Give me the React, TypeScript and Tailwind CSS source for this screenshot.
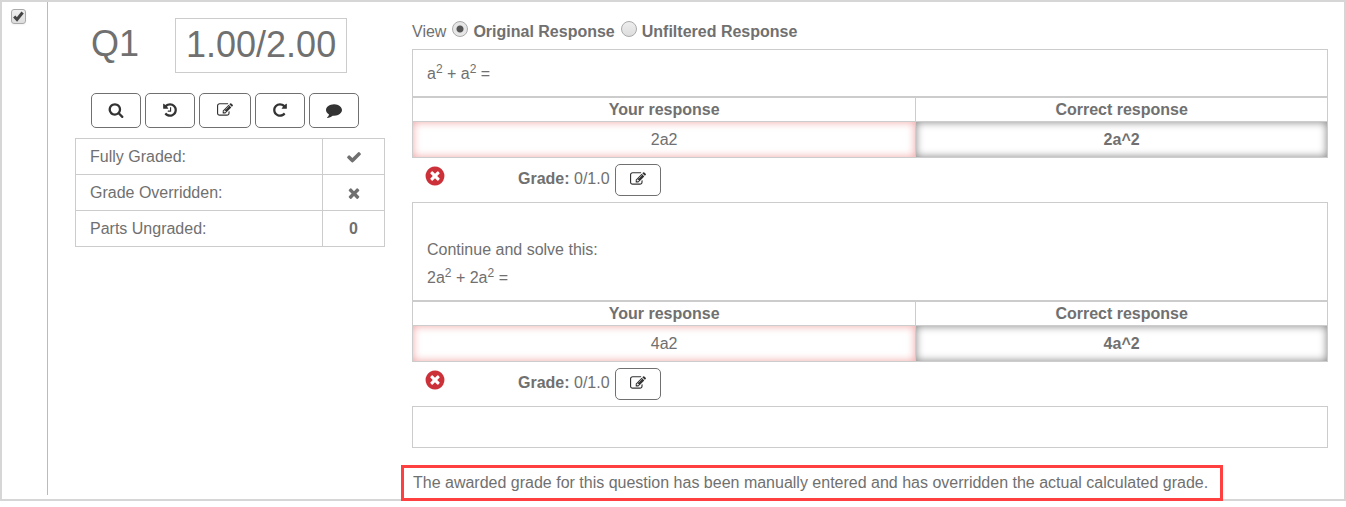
import { ReactNode, useState } from 'react'
import clsx from 'clsx'

const icons = {
    search: 'M1216 832q0-185-131.5-316.5t-316.5-131.5-316.5 131.5-131.5 316.5 131.5 316.5 316.5 131.5 316.5-131.5 131.5-316.5zm512 832q0 52-38 90t-90 38q-54 0-90-38l-343-342q-179 124-399 124-143 0-273.5-55.5t-225-150-150-225-55.5-273.5 55.5-273.5 150-225 225-150 273.5-55.5 273.5 55.5 225 150 150 225 55.5 273.5q0 220-124 399l343 343q37 37 37 90z',
    history: 'M1664 896q0 156-61 298t-164 245-245 164-298 61q-172 0-327-72.5t-264-204.5q-7-10-6.5-22.5t8.5-20.5l137-138q10-9 25-9 16 2 23 12 73 95 179 147t225 52q104 0 198.5-40.5t163.5-109.5 109.5-163.5 40.5-198.5-40.5-198.5-109.5-163.5-163.5-109.5-198.5-40.5q-98 0-188 35.5t-160 101.5l137 138q31 30 14 69-17 40-59 40h-448q-26 0-45-19t-19-45v-448q0-42 40-59 39-17 69 14l130 129q107-101 244.5-156.5t284.5-55.5q156 0 298 61t245 164 164 245 61 298zm-640-288v448q0 14-9 23t-23 9h-320q-14 0-23-9t-9-23v-64q0-14 9-23t23-9h224v-352q0-14 9-23t23-9h64q14 0 23 9t9 23z',
    edit: 'M888 1184l116-116-152-152-116 116v56h96v96h56zm440-720q-16-16-33 1l-350 350q-17 17-1 33t33-1l350-350q17-17 1-33zm80 594v190q0 119-84.5 203.5t-203.5 84.5h-832q-119 0-203.5-84.5t-84.5-203.5v-832q0-119 84.5-203.5t203.5-84.5h832q63 0 117 25 15 7 18 23 3 17-9 29l-49 49q-14 14-32 8-23-6-45-6h-832q-66 0-113 47t-47 113v832q0 66 47 113t113 47h832q66 0 113-47t47-113v-126q0-13 9-22l64-64q15-15 35-7t20 29zm-96-738l288 288-672 672h-288v-288zm444 132l-92 92-288-288 92-92q28-28 68-28t68 28l152 152q28 28 28 68t-28 68z',
    repeat: 'M1664 256v448q0 26-19 45t-45 19h-448q-42 0-59-40-17-39 14-69l138-138q-148-137-349-137-104 0-198.5 40.5t-163.5 109.5-109.5 163.5-40.5 198.5 40.5 198.5 109.5 163.5 163.5 109.5 198.5 40.5q119 0 225-52t179-147q7-10 23-12 15 0 25 9l137 138q9 8 9.5 20.5t-7.5 22.5q-109 132-264 204.5t-327 72.5q-156 0-298-61t-245-164-164-245-61-298 61-298 164-245 245-164 298-61q147 0 284.5 55.5t244.5 156.5l130-129q29-31 70-14 39 17 39 59z',
    comment: 'M1792 896q0 174-120 321.5t-326 233-450 85.5q-70 0-145-8-198 175-460 242-49 14-114 22h-5q-15 0-27-10.5t-16-27.5v-1q-3-4-.5-12t2-10 4.5-9.5l6-9 7-8.5 8-9q7-8 31-34.5t34.5-38 31-39.5 32.5-51 27-59 26-76q-157-89-247.5-220t-90.5-281q0-130 71-248.5t191-204.5 286-136.5 348-50.5q244 0 450 85.5t326 233 120 321.5z',
    check: 'M1671 566q0 40-28 68l-724 724-136 136q-28 28-68 28t-68-28l-136-136-362-362q-28-28-28-68t28-68l136-136q28-28 68-28t68 28l294 295 656-657q28-28 68-28t68 28l136 136q28 28 28 68z',
    times: 'M1490 1322q0 40-28 68l-136 136q-28 28-68 28t-68-28l-294-294-294 294q-28 28-68 28t-68-28l-136-136q-28-28-28-68t28-68l294-294-294-294q-28-28-28-68t28-68l136-136q28-28 68-28t68 28l294 294 294-294q28-28 68-28t68 28l136 136q28 28 28 68t-28 68l-294 294 294 294q28 28 28 68z',
    timesCircle:
        'M1277 1122q0-26-19-45l-181-181 181-181q19-19 19-45 0-27-19-46l-90-90q-19-19-46-19-26 0-45 19l-181 181-181-181q-19-19-45-19-27 0-46 19l-90 90q-19 19-19 46 0 26 19 45l181 181-181 181q-19 19-19 45 0 27 19 46l90 90q19 19 46 19 26 0 45-19l181-181 181 181q19 19 45 19 27 0 46-19l90-90q19-19 19-46zm387-226q0 209-103 385.5t-279.5 279.5-385.5 103-385.5-103-279.5-279.5-103-385.5 103-385.5 279.5-279.5 385.5-103 385.5 103 279.5 279.5 103 385.5z',
}

type IconName = keyof typeof icons

const Icon = ({ name, className = 'size-4' }: { name: IconName; className?: string }) => (
    <svg viewBox="0 0 1792 1792" fill="currentColor" className={className} aria-hidden="true">
        <path d={icons[name]} />
    </svg>
)

interface IconButtonProps {
    icon: IconName
    label: string
    className: string
}

const IconButton = ({ icon, label, className }: IconButtonProps) => (
    <button
        type="button"
        aria-label={label}
        className={clsx(
            'flex items-center justify-center rounded-[5px] border border-[#707070] bg-white pb-[2px] text-[#333]',
            className
        )}
    >
        <Icon name={icon} />
    </button>
)

const actions: IconButtonProps[] = [
    { icon: 'search', label: 'View details', className: 'h-[35px] w-[50px]' },
    { icon: 'history', label: 'History', className: 'h-[35px] w-[50px]' },
    { icon: 'edit', label: 'Edit grade', className: 'h-[35px] w-[52px]' },
    { icon: 'repeat', label: 'Regrade', className: 'h-[35px] w-[50px]' },
    { icon: 'comment', label: 'Comment', className: 'h-[35px] w-[50px]' },
]

const summary: { label: string; value: ReactNode }[] = [
    { label: 'Fully Graded:', value: <Icon name="check" className="mx-auto size-4" /> },
    { label: 'Grade Overridden:', value: <Icon name="times" className="mx-auto size-4" /> },
    { label: 'Parts Ungraded:', value: '0' },
]

const views = ['Original Response', 'Unfiltered Response']

const Prompt = ({ children }: { children: ReactNode }) => (
    <div className="border border-[#ccc] px-[14px] pt-[10px] pb-2 leading-7">{children}</div>
)

const ResponsePart = ({ response, correct }: { response: string; correct: string }) => (
    <>
        <table className="w-full table-fixed border-collapse text-center">
            <thead>
                <tr className="h-6">
                    <th className="w-[55%] border border-[#ccc]">Your response</th>
                    <th className="border border-[#ccc]">Correct response</th>
                </tr>
            </thead>
            <tbody>
                <tr className="h-9">
                    <td className="border border-[#ccc] shadow-[inset_0_0_8px_#f0a5a5]">
                        {response}
                    </td>
                    <td className="border border-[#ccc] font-bold shadow-[inset_0_0_8px_#808080]">
                        {correct}
                    </td>
                </tr>
            </tbody>
        </table>
        <div className="flex h-11 items-center pl-3">
            <Icon name="timesCircle" className="mb-2 size-[22px] text-[#cc3038]" />
            <p className="mr-[5px] mb-[2px] ml-[72px]">
                <b>Grade:</b> 0/1.0
            </p>
            <IconButton icon="edit" label="Edit part grade" className="h-8 w-[46px]" />
        </div>
    </>
)

const App = () => {
    const [view, setView] = useState(views[0])

    return (
        <main className="flex border-2 border-[#d6d6d6] bg-white font-['Liberation_Sans',Arial,sans-serif] text-base leading-5 text-[#707070]">
            <div className="mb-1 w-[46px] shrink-0 border-r border-[#bbb] pt-[7px] pl-[9px]">
                <label className="relative block size-[15px]">
                    <input
                        type="checkbox"
                        defaultChecked
                        aria-label="Select question 1"
                        className="peer block size-[15px] appearance-none rounded-[3px] border border-[#aaa] bg-linear-to-b from-[#eee] to-[#ddd] shadow-xs"
                    />
                    <svg
                        viewBox="0 0 15 15"
                        className="pointer-events-none absolute inset-0 hidden size-[15px] peer-checked:block"
                        aria-hidden="true"
                    >
                        <path
                            d="M3.2 7.5l2.8 3 5.6-7"
                            fill="none"
                            stroke="#444"
                            strokeWidth="3"
                        />
                    </svg>
                </label>
            </div>

            <section className="ml-[27px] w-[310px] shrink-0 pt-4">
                <div className="flex items-start gap-9 pl-4 text-4xl leading-[41px]">
                    <h1 className="pt-[5px]">Q1</h1>
                    <div className="border border-[#ccc] px-[10px] pt-[5px] pb-[7px]">
                        1.00/2.00
                    </div>
                </div>
                <div className="mt-5 flex gap-1 pl-4">
                    {actions.map((action) => (
                        <IconButton key={action.label} {...action} />
                    ))}
                </div>
                <table className="mt-[10px] w-full border-collapse">
                    <tbody>
                        {summary.map((row) => (
                            <tr key={row.label} className="h-9">
                                <th
                                    scope="row"
                                    className="border border-[#ccc] px-[14px] text-left font-normal"
                                >
                                    {row.label}
                                </th>
                                <td className="w-[62px] border border-[#ccc] text-center font-bold">
                                    {row.value}
                                </td>
                            </tr>
                        ))}
                    </tbody>
                </table>
            </section>

            <section className="mr-4 ml-[27px] min-w-0 flex-1 pt-[19px]">
                <div className="flex h-7 items-start gap-[6px] leading-[22px]">
                    <span>View</span>
                    {views.map((name) => (
                        <label key={name} className="flex items-start gap-[5px] font-bold">
                            <input
                                type="radio"
                                name="view"
                                checked={view === name}
                                onChange={() => setView(name)}
                                className="size-4 appearance-none rounded-full border border-[#aaa] bg-linear-to-b from-[#eee] to-[#ddd] checked:bg-[radial-gradient(circle,#555_0_3px,#e6e6e6_4px)]"
                            />
                            {name}
                        </label>
                    ))}
                </div>

                <Prompt>
                    a<sup>2</sup> + a<sup>2</sup> =
                </Prompt>
                <ResponsePart response="2a2" correct="2a^2" />

                <Prompt>
                    <p className="mt-[23px]">Continue and solve this:</p>
                    <p>
                        2a<sup>2</sup> + 2a<sup>2</sup> =
                    </p>
                </Prompt>
                <ResponsePart response="4a2" correct="4a^2" />

                <div className="h-[42px] border border-[#ccc]" />

                {/* sits over the bottom edge of the frame */}
                <p className="relative mt-[17px] -mb-[2px] -ml-[11px] w-fit border-3 border-[#ff4040] bg-white py-[5px] pr-3 pl-[9px]">
                    The awarded grade for this question has been manually entered and has
                    overridden the actual calculated grade.
                </p>
            </section>
        </main>
    )
}

export default App
